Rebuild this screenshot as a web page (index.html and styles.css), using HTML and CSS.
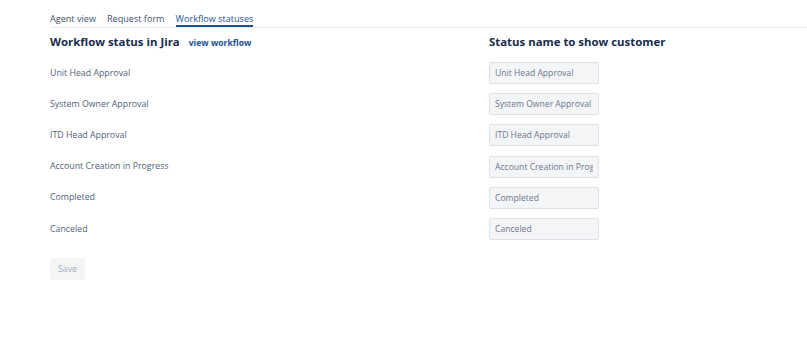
FILE: index.html
```html
<!DOCTYPE html>
<html>
<head>
<meta charset="utf-8">
<link rel="stylesheet" href="styles.css">
</head>
<body>
<div class="page">
  <nav class="tabs">
    <span class="tab">Agent view</span>
    <span class="tab">Request form</span>
    <span class="tab active">Workflow statuses</span>
  </nav>
  <div class="grid">
    <div class="head"><span class="title">Workflow status in Jira</span><a class="link">view workflow</a></div>
    <div class="head"><span class="title">Status name to show customer</span></div>

    <div class="label">Unit Head Approval</div>
    <div><input class="field" value="Unit Head Approval" disabled></div>
    <div class="label">System Owner Approval</div>
    <div><input class="field" value="System Owner Approval" disabled></div>
    <div class="label">ITD Head Approval</div>
    <div><input class="field" value="ITD Head Approval" disabled></div>
    <div class="label">Account Creation in Progress</div>
    <div><input class="field" value="Account Creation in Progress" disabled></div>
    <div class="label">Completed</div>
    <div><input class="field" value="Completed" disabled></div>
    <div class="label">Canceled</div>
    <div><input class="field" value="Canceled" disabled></div>
  </div>
  <button class="save" disabled>Save</button>
</div>
</body>
</html>
```
FILE: styles.css
```css
html, body { margin: 0; padding: 0; background: #fff; }
body { font-family: "Open Sans", "Noto Sans", sans-serif; color: #505f79; }
.page { padding: 11px 0 0 50px; }
.tabs {
  display: flex; gap: 11px;
  border-bottom: 1px solid #ebecf0;
  font-size: 9.1px; color: #42526e;
  height: 16px;
}
.tab { padding-top: 1px; line-height: 13px; }
.tab.active { color: #1d4f91; border-bottom: 2px solid #1d4f91; height: 13px; }
.grid {
  display: grid;
  grid-template-columns: 439px 1fr;
  grid-template-rows: 28px repeat(6, 31.2px);
  align-items: center;
}
.grid .head { align-self: start; padding-top: 6px; display: flex; align-items: baseline; gap: 9px; }
.title { font-weight: 700; font-size: 11.4px; color: #172b4d; }
.link { font-weight: 700; font-size: 8.6px; color: #1d4f91; }
.label { font-size: 8.8px; color: #505f79; padding-top: 2px; }
.field {
  box-sizing: border-box; width: 110px; height: 22px; margin: 0;
  border: 1px solid #dfe1e6; border-radius: 2px; background: #f4f5f7;
  font-family: "Open Sans", "Noto Sans", sans-serif; font-size: 8.6px; color: #6b778c;
  padding: 0 5px;
}
.save {
  margin-top: 15px;
  width: 35px; height: 22px;
  border: none; border-radius: 2px; background: #f4f5f7;
  font-family: "Open Sans", "Noto Sans", sans-serif; font-size: 8.8px; color: #a5adba;
  padding: 0;
}
```
